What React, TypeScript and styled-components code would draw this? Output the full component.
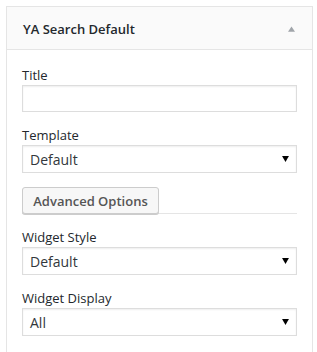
import styled, { createGlobalStyle } from "styled-components";

const GlobalStyle = createGlobalStyle`
  html, body {
    margin: 0;
    padding: 0;
    background: #ffffff;
    overflow: hidden;
  }
  body {
    font-family: "Open Sans", "Liberation Sans", sans-serif;
    color: #23282d;
  }
`;

const fields = [
  { label: "Template", value: "Default" },
];

export default function App() {
  return (
    <>
      <GlobalStyle />
      <Panel>
        <Header>
          <h3>YA Search Default</h3>
          <Toggle viewBox="0 0 8 6" aria-hidden="true">
            <path d="M4 0 L8 6 L0 6 Z" />
          </Toggle>
        </Header>
        <Content>
          <Field>
            <Label>Title</Label>
            <TextInput type="text" />
          </Field>
          {fields.map((f) => (
            <Field key={f.label}>
              <Label>{f.label}</Label>
              <Select value={f.value} />
            </Field>
          ))}
          <AdvancedRow>
            <Button type="button">Advanced Options</Button>
          </AdvancedRow>
          <Field>
            <Label>Widget Style</Label>
            <Select value="Default" />
          </Field>
          <Field>
            <Label>Widget Display</Label>
            <Select value="All" />
          </Field>
        </Content>
      </Panel>
    </>
  );
}

function Select({ value }: { value: string }) {
  return (
    <SelectBox>
      <span>{value}</span>
      <Arrow viewBox="0 0 8 7" aria-hidden="true">
        <path d="M0 0 L8 0 L4 7 Z" />
      </Arrow>
    </SelectBox>
  );
}

const Panel = styled.div`
  margin: 6px 0 0 6px;
  width: 307px;
  box-sizing: border-box;
  border: 1px solid #e5e5e5;
  background: #ffffff;
`;

const Header = styled.div`
  height: 42px;
  background: #fafafa;
  border-bottom: 1px solid #e5e5e5;
  display: flex;
  align-items: center;
  justify-content: space-between;
  padding: 0 17px 0 16px;

  h3 {
    margin: 0;
    font-size: 13px;
    font-weight: 600;
    color: #23282d;
    line-height: 20px;
    padding-top: 1px;
  }
`;

const Toggle = styled.svg`
  width: 7px;
  height: 6px;
  fill: #a0a5aa;
  margin-top: 1px;
`;

const Content = styled.div`
  padding: 16px 15px 30px 15px;
  display: flex;
  flex-direction: column;
  gap: 14px;
`;

const Field = styled.div`
  display: flex;
  flex-direction: column;
`;

const Label = styled.label`
  font-size: 13px;
  line-height: 18px;
  margin-bottom: 1px;
  color: #23282d;
`;

const TextInput = styled.input`
  box-sizing: border-box;
  width: 275px;
  height: 27px;
  margin: 0;
  border: 1px solid #ddd;
  box-shadow: inset 0 1px 2px rgba(0, 0, 0, 0.07);
  background: #fff;
  font-family: inherit;
  font-size: 14px;
  outline: none;
`;

const SelectBox = styled.div`
  position: relative;
  box-sizing: border-box;
  width: 275px;
  height: 28px;
  border: 1px solid #ddd;
  box-shadow: inset 0 1px 2px rgba(0, 0, 0, 0.07);
  background: #fff;
  display: flex;
  align-items: center;
  padding: 0 7px;
  font-size: 14px;
  color: #32373c;
`;

const Arrow = styled.svg`
  position: absolute;
  right: 7px;
  top: 10px;
  width: 7px;
  height: 6px;
  fill: #000;
`;

const AdvancedRow = styled.div`
  display: flex;
  border-bottom: 1px solid #e5e5e5;
`;

const Button = styled.button`
  box-sizing: border-box;
  width: 137px;
  height: 27px;
  margin: 0 0 -1px 0;
  padding: 0 10px;
  border: 1px solid #ccc;
  border-radius: 3px;
  background: #f7f7f7;
  box-shadow: 0 1px 0 #ccc;
  font-family: inherit;
  font-size: 13px;
  font-weight: 600;
  color: #555;
  white-space: nowrap;
  cursor: pointer;
`;
